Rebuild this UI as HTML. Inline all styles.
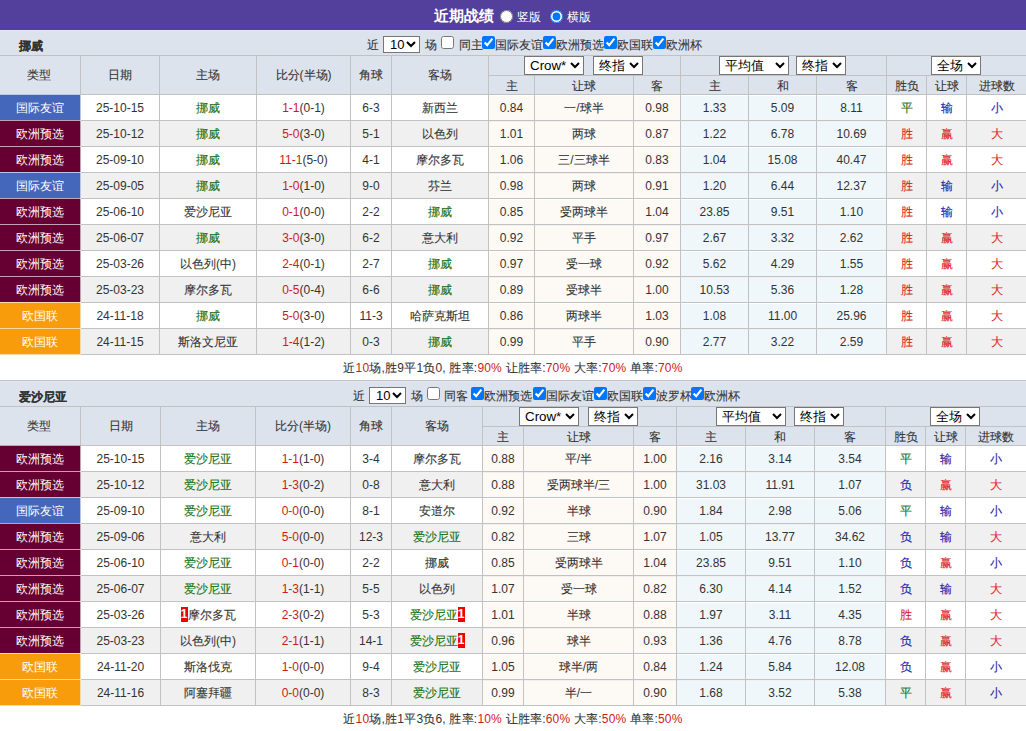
<!DOCTYPE html>
<html><head><meta charset="utf-8"><style>
*{box-sizing:border-box}
html,body{margin:0;padding:0}
body{width:1026px;height:731px;position:relative;overflow:hidden;background:#fff;font-family:"Liberation Sans",sans-serif;font-size:12px;color:#333}
.r{position:absolute}
.c{position:absolute;display:flex;align-items:center;justify-content:center;white-space:nowrap;line-height:14px}
.t{position:absolute;white-space:nowrap;line-height:14px}
.sel{position:absolute;height:19px;margin:0;padding:0 0 0 1px;font-family:"Liberation Sans",sans-serif;font-size:13.33px;color:#000;background:#fff}
.cb{position:absolute;margin:0;width:13px;height:13px}
.rad{position:absolute;margin:0;width:13px;height:13px}
.k{-webkit-text-stroke:0.1px}
.rc{display:inline-block;width:7px;height:15px;background:#e00;color:#fff;font-weight:bold;font-size:12px;line-height:15px;text-align:center;overflow:hidden}
</style></head>
<body>
<div class="r" style="left:0;top:0;width:1026px;height:30px;background:#52409c"></div>
<div class="t" style="left:434px;top:9px;color:#fff;font-size:15px;font-weight:bold">近期战绩</div>
<input type="radio" name="v" class="rad" style="left:500px;top:10px">
<div class="t" style="left:517px;top:10px;color:#fff">竖版</div>
<input type="radio" name="v" class="rad" checked style="left:550px;top:10px">
<div class="t" style="left:567px;top:10px;color:#fff">横版</div>

<div class="r" style="left:0px;top:30px;width:1026px;height:1px;background:#e6e6f8;"></div><div class="r" style="left:0px;top:31px;width:1026px;height:24px;background:#dce3ed;"></div><div class="c" style="left:19px;top:34px;width:100px;height:24px;justify-content:flex-start;font-weight:bold"><b><span class="k">挪威</span></b></div><div class="t" style="left:367px;top:38px"><span class="k">近</span></div><select class="sel" style="left:383px;top:36px;width:37px;height:17px"><option></option></select><div class="t" style="left:390px;top:38px"><span style="color:#000;font-size:13px">10</span></div><div class="t" style="left:425px;top:38px"><span class="k">场</span></div><input type="checkbox" class="cb" style="left:441px;top:36px"><div class="t" style="left:459px;top:38px"><span class="k">同主</span></div><input type="checkbox" class="cb" checked style="left:482px;top:36px"><div class="t" style="left:495px;top:38px"><span class="k">国际友谊</span></div><input type="checkbox" class="cb" checked style="left:543px;top:36px"><div class="t" style="left:556px;top:38px"><span class="k">欧洲预选</span></div><input type="checkbox" class="cb" checked style="left:604px;top:36px"><div class="t" style="left:617px;top:38px"><span class="k">欧国联</span></div><input type="checkbox" class="cb" checked style="left:653px;top:36px"><div class="t" style="left:666px;top:38px"><span class="k">欧洲杯</span></div><div class="r" style="left:0px;top:55px;width:1026px;height:39px;background:#dce3ed;"></div><div class="r" style="left:0px;top:55px;width:1026px;height:1px;background:#c2c2c2;"></div><div class="r" style="left:488px;top:75px;width:538px;height:1px;background:#c2c2c2;"></div><div class="r" style="left:0px;top:94px;width:1026px;height:1px;background:#c2c2c2;"></div><div class="r" style="left:0px;top:95px;width:1026px;height:25px;background:#fff;"></div><div class="r" style="left:489px;top:96px;width:191px;height:24px;background:#fdf9f5;"></div><div class="r" style="left:681px;top:96px;width:205px;height:24px;background:#f0f7fb;"></div><div class="r" style="left:0px;top:120px;width:1026px;height:1px;background:#c2c2c2;"></div><div class="r" style="left:0px;top:121px;width:1026px;height:25px;background:#f0f0f0;"></div><div class="r" style="left:489px;top:122px;width:191px;height:24px;background:#fdf9f5;"></div><div class="r" style="left:681px;top:122px;width:205px;height:24px;background:#f0f7fb;"></div><div class="r" style="left:0px;top:146px;width:1026px;height:1px;background:#c2c2c2;"></div><div class="r" style="left:0px;top:147px;width:1026px;height:25px;background:#fff;"></div><div class="r" style="left:489px;top:148px;width:191px;height:24px;background:#fdf9f5;"></div><div class="r" style="left:681px;top:148px;width:205px;height:24px;background:#f0f7fb;"></div><div class="r" style="left:0px;top:172px;width:1026px;height:1px;background:#c2c2c2;"></div><div class="r" style="left:0px;top:173px;width:1026px;height:25px;background:#f0f0f0;"></div><div class="r" style="left:489px;top:174px;width:191px;height:24px;background:#fdf9f5;"></div><div class="r" style="left:681px;top:174px;width:205px;height:24px;background:#f0f7fb;"></div><div class="r" style="left:0px;top:198px;width:1026px;height:1px;background:#c2c2c2;"></div><div class="r" style="left:0px;top:199px;width:1026px;height:25px;background:#fff;"></div><div class="r" style="left:489px;top:200px;width:191px;height:24px;background:#fdf9f5;"></div><div class="r" style="left:681px;top:200px;width:205px;height:24px;background:#f0f7fb;"></div><div class="r" style="left:0px;top:224px;width:1026px;height:1px;background:#c2c2c2;"></div><div class="r" style="left:0px;top:225px;width:1026px;height:25px;background:#f0f0f0;"></div><div class="r" style="left:489px;top:226px;width:191px;height:24px;background:#fdf9f5;"></div><div class="r" style="left:681px;top:226px;width:205px;height:24px;background:#f0f7fb;"></div><div class="r" style="left:0px;top:250px;width:1026px;height:1px;background:#c2c2c2;"></div><div class="r" style="left:0px;top:251px;width:1026px;height:25px;background:#fff;"></div><div class="r" style="left:489px;top:252px;width:191px;height:24px;background:#fdf9f5;"></div><div class="r" style="left:681px;top:252px;width:205px;height:24px;background:#f0f7fb;"></div><div class="r" style="left:0px;top:276px;width:1026px;height:1px;background:#c2c2c2;"></div><div class="r" style="left:0px;top:277px;width:1026px;height:25px;background:#f0f0f0;"></div><div class="r" style="left:489px;top:278px;width:191px;height:24px;background:#fdf9f5;"></div><div class="r" style="left:681px;top:278px;width:205px;height:24px;background:#f0f7fb;"></div><div class="r" style="left:0px;top:302px;width:1026px;height:1px;background:#c2c2c2;"></div><div class="r" style="left:0px;top:303px;width:1026px;height:25px;background:#fff;"></div><div class="r" style="left:489px;top:304px;width:191px;height:24px;background:#fdf9f5;"></div><div class="r" style="left:681px;top:304px;width:205px;height:24px;background:#f0f7fb;"></div><div class="r" style="left:0px;top:328px;width:1026px;height:1px;background:#c2c2c2;"></div><div class="r" style="left:0px;top:329px;width:1026px;height:25px;background:#f0f0f0;"></div><div class="r" style="left:489px;top:330px;width:191px;height:24px;background:#fdf9f5;"></div><div class="r" style="left:681px;top:330px;width:205px;height:24px;background:#f0f7fb;"></div><div class="r" style="left:0px;top:354px;width:1026px;height:1px;background:#c2c2c2;"></div><div class="r" style="left:80px;top:55px;width:1px;height:300px;background:#c2c2c2;"></div><div class="r" style="left:159px;top:55px;width:1px;height:300px;background:#c2c2c2;"></div><div class="r" style="left:256px;top:55px;width:1px;height:300px;background:#c2c2c2;"></div><div class="r" style="left:350px;top:55px;width:1px;height:300px;background:#c2c2c2;"></div><div class="r" style="left:391px;top:55px;width:1px;height:300px;background:#c2c2c2;"></div><div class="r" style="left:488px;top:55px;width:1px;height:300px;background:#c2c2c2;"></div><div class="r" style="left:534px;top:75px;width:1px;height:280px;background:#c2c2c2;"></div><div class="r" style="left:633px;top:75px;width:1px;height:280px;background:#c2c2c2;"></div><div class="r" style="left:680px;top:55px;width:1px;height:300px;background:#c2c2c2;"></div><div class="r" style="left:748px;top:75px;width:1px;height:280px;background:#c2c2c2;"></div><div class="r" style="left:816px;top:75px;width:1px;height:280px;background:#c2c2c2;"></div><div class="r" style="left:886px;top:55px;width:1px;height:300px;background:#c2c2c2;"></div><div class="r" style="left:926px;top:75px;width:1px;height:280px;background:#c2c2c2;"></div><div class="r" style="left:966px;top:75px;width:1px;height:280px;background:#c2c2c2;"></div><div class="r" style="left:0px;top:94px;width:81px;height:27px;background:#4466bb;"></div><div class="r" style="left:0px;top:120px;width:81px;height:27px;background:#660033;"></div><div class="r" style="left:0px;top:146px;width:81px;height:27px;background:#660033;"></div><div class="r" style="left:0px;top:172px;width:81px;height:27px;background:#4466bb;"></div><div class="r" style="left:0px;top:198px;width:81px;height:27px;background:#660033;"></div><div class="r" style="left:0px;top:224px;width:81px;height:27px;background:#660033;"></div><div class="r" style="left:0px;top:250px;width:81px;height:27px;background:#660033;"></div><div class="r" style="left:0px;top:276px;width:81px;height:27px;background:#660033;"></div><div class="r" style="left:0px;top:302px;width:81px;height:27px;background:#f99c0b;"></div><div class="r" style="left:0px;top:328px;width:81px;height:27px;background:#f99c0b;"></div><div class="r" style="left:0px;top:94px;width:80px;height:1px;background:rgba(255,255,255,0.63);"></div><div class="r" style="left:80px;top:94px;width:1px;height:27px;background:rgba(255,255,255,0.63);"></div><div class="r" style="left:0px;top:120px;width:80px;height:1px;background:rgba(255,255,255,0.63);"></div><div class="r" style="left:80px;top:120px;width:1px;height:27px;background:rgba(255,255,255,0.63);"></div><div class="r" style="left:0px;top:146px;width:80px;height:1px;background:rgba(255,255,255,0.63);"></div><div class="r" style="left:80px;top:146px;width:1px;height:27px;background:rgba(255,255,255,0.63);"></div><div class="r" style="left:0px;top:172px;width:80px;height:1px;background:rgba(255,255,255,0.63);"></div><div class="r" style="left:80px;top:172px;width:1px;height:27px;background:rgba(255,255,255,0.63);"></div><div class="r" style="left:0px;top:198px;width:80px;height:1px;background:rgba(255,255,255,0.63);"></div><div class="r" style="left:80px;top:198px;width:1px;height:27px;background:rgba(255,255,255,0.63);"></div><div class="r" style="left:0px;top:224px;width:80px;height:1px;background:rgba(255,255,255,0.63);"></div><div class="r" style="left:80px;top:224px;width:1px;height:27px;background:rgba(255,255,255,0.63);"></div><div class="r" style="left:0px;top:250px;width:80px;height:1px;background:rgba(255,255,255,0.63);"></div><div class="r" style="left:80px;top:250px;width:1px;height:27px;background:rgba(255,255,255,0.63);"></div><div class="r" style="left:0px;top:276px;width:80px;height:1px;background:rgba(255,255,255,0.63);"></div><div class="r" style="left:80px;top:276px;width:1px;height:27px;background:rgba(255,255,255,0.63);"></div><div class="r" style="left:0px;top:302px;width:80px;height:1px;background:rgba(255,255,255,0.63);"></div><div class="r" style="left:80px;top:302px;width:1px;height:27px;background:rgba(255,255,255,0.63);"></div><div class="r" style="left:0px;top:328px;width:80px;height:1px;background:rgba(255,255,255,0.63);"></div><div class="r" style="left:80px;top:328px;width:1px;height:27px;background:rgba(255,255,255,0.63);"></div><div class="r" style="left:0px;top:354px;width:80px;height:1px;background:rgba(255,255,255,0.63);"></div><div class="c" style="left:0px;top:56px;width:78px;height:38px;"><span class="k">类型</span></div><div class="c" style="left:81px;top:56px;width:78px;height:38px;"><span class="k">日期</span></div><div class="c" style="left:160px;top:56px;width:96px;height:38px;"><span class="k">主场</span></div><div class="c" style="left:257px;top:56px;width:93px;height:38px;"><span class="k">比分</span>(<span class="k">半场</span>)</div><div class="c" style="left:351px;top:56px;width:40px;height:38px;"><span class="k">角球</span></div><div class="c" style="left:392px;top:56px;width:96px;height:38px;"><span class="k">客场</span></div><div class="c" style="left:489px;top:77px;width:45px;height:18px;"><span class="k">主</span></div><div class="c" style="left:535px;top:77px;width:98px;height:18px;"><span class="k">让球</span></div><div class="c" style="left:634px;top:77px;width:46px;height:18px;"><span class="k">客</span></div><div class="c" style="left:681px;top:77px;width:67px;height:18px;"><span class="k">主</span></div><div class="c" style="left:749px;top:77px;width:67px;height:18px;"><span class="k">和</span></div><div class="c" style="left:817px;top:77px;width:69px;height:18px;"><span class="k">客</span></div><div class="c" style="left:887px;top:77px;width:39px;height:18px;"><span class="k">胜负</span></div><div class="c" style="left:927px;top:77px;width:39px;height:18px;"><span class="k">让球</span></div><div class="c" style="left:967px;top:77px;width:59px;height:18px;"><span class="k">进球数</span></div><select class="sel" style="left:524px;top:56px;width:60px;"><option>Crow*</option></select><select class="sel" style="left:593px;top:56px;width:50px;"><option>终指</option></select><select class="sel" style="left:719px;top:56px;width:70px;"><option>平均值</option></select><select class="sel" style="left:796px;top:56px;width:50px;"><option>终指</option></select><select class="sel" style="left:931px;top:56px;width:50px;"><option>全场</option></select><div class="c" style="left:0px;top:95px;width:79px;height:25px;color:#fff">国际友谊</div><div class="c" style="left:81px;top:95px;width:78px;height:25px;">25-10-15</div><div class="c" style="left:160px;top:95px;width:96px;height:25px;"><span style="color:#137013"><span class="k">挪威</span></span></div><div class="c" style="left:257px;top:95px;width:93px;height:25px;"><span style="color:#cc1a1a">1-1</span>(0-1)</div><div class="c" style="left:351px;top:95px;width:40px;height:25px;">6-3</div><div class="c" style="left:392px;top:95px;width:96px;height:25px;"><span class="k">新西兰</span></div><div class="c" style="left:489px;top:95px;width:45px;height:25px;">0.84</div><div class="c" style="left:535px;top:95px;width:98px;height:25px;"><span class="k">一</span>/<span class="k">球半</span></div><div class="c" style="left:634px;top:95px;width:46px;height:25px;">0.98</div><div class="c" style="left:681px;top:95px;width:67px;height:25px;">1.33</div><div class="c" style="left:749px;top:95px;width:67px;height:25px;">5.09</div><div class="c" style="left:817px;top:95px;width:69px;height:25px;">8.11</div><div class="c" style="left:887px;top:95px;width:39px;height:25px;color:#137013"><span class="k">平</span></div><div class="c" style="left:927px;top:95px;width:39px;height:25px;color:#1a1aa8"><span class="k">输</span></div><div class="c" style="left:967px;top:95px;width:59px;height:25px;color:#1a1aa8"><span class="k">小</span></div><div class="c" style="left:0px;top:121px;width:79px;height:25px;color:#fff">欧洲预选</div><div class="c" style="left:81px;top:121px;width:78px;height:25px;">25-10-12</div><div class="c" style="left:160px;top:121px;width:96px;height:25px;"><span style="color:#137013"><span class="k">挪威</span></span></div><div class="c" style="left:257px;top:121px;width:93px;height:25px;"><span style="color:#cc1a1a">5-0</span>(3-0)</div><div class="c" style="left:351px;top:121px;width:40px;height:25px;">5-1</div><div class="c" style="left:392px;top:121px;width:96px;height:25px;"><span class="k">以色列</span></div><div class="c" style="left:489px;top:121px;width:45px;height:25px;">1.01</div><div class="c" style="left:535px;top:121px;width:98px;height:25px;"><span class="k">两球</span></div><div class="c" style="left:634px;top:121px;width:46px;height:25px;">0.87</div><div class="c" style="left:681px;top:121px;width:67px;height:25px;">1.22</div><div class="c" style="left:749px;top:121px;width:67px;height:25px;">6.78</div><div class="c" style="left:817px;top:121px;width:69px;height:25px;">10.69</div><div class="c" style="left:887px;top:121px;width:39px;height:25px;color:#dd1c1c"><span class="k">胜</span></div><div class="c" style="left:927px;top:121px;width:39px;height:25px;color:#dd1c1c"><span class="k">赢</span></div><div class="c" style="left:967px;top:121px;width:59px;height:25px;color:#dd1c1c"><span class="k">大</span></div><div class="c" style="left:0px;top:147px;width:79px;height:25px;color:#fff">欧洲预选</div><div class="c" style="left:81px;top:147px;width:78px;height:25px;">25-09-10</div><div class="c" style="left:160px;top:147px;width:96px;height:25px;"><span style="color:#137013"><span class="k">挪威</span></span></div><div class="c" style="left:257px;top:147px;width:93px;height:25px;"><span style="color:#cc1a1a">11-1</span>(5-0)</div><div class="c" style="left:351px;top:147px;width:40px;height:25px;">4-1</div><div class="c" style="left:392px;top:147px;width:96px;height:25px;"><span class="k">摩尔多瓦</span></div><div class="c" style="left:489px;top:147px;width:45px;height:25px;">1.06</div><div class="c" style="left:535px;top:147px;width:98px;height:25px;"><span class="k">三</span>/<span class="k">三球半</span></div><div class="c" style="left:634px;top:147px;width:46px;height:25px;">0.83</div><div class="c" style="left:681px;top:147px;width:67px;height:25px;">1.04</div><div class="c" style="left:749px;top:147px;width:67px;height:25px;">15.08</div><div class="c" style="left:817px;top:147px;width:69px;height:25px;">40.47</div><div class="c" style="left:887px;top:147px;width:39px;height:25px;color:#dd1c1c"><span class="k">胜</span></div><div class="c" style="left:927px;top:147px;width:39px;height:25px;color:#dd1c1c"><span class="k">赢</span></div><div class="c" style="left:967px;top:147px;width:59px;height:25px;color:#dd1c1c"><span class="k">大</span></div><div class="c" style="left:0px;top:173px;width:79px;height:25px;color:#fff">国际友谊</div><div class="c" style="left:81px;top:173px;width:78px;height:25px;">25-09-05</div><div class="c" style="left:160px;top:173px;width:96px;height:25px;"><span style="color:#137013"><span class="k">挪威</span></span></div><div class="c" style="left:257px;top:173px;width:93px;height:25px;"><span style="color:#cc1a1a">1-0</span>(1-0)</div><div class="c" style="left:351px;top:173px;width:40px;height:25px;">9-0</div><div class="c" style="left:392px;top:173px;width:96px;height:25px;"><span class="k">芬兰</span></div><div class="c" style="left:489px;top:173px;width:45px;height:25px;">0.98</div><div class="c" style="left:535px;top:173px;width:98px;height:25px;"><span class="k">两球</span></div><div class="c" style="left:634px;top:173px;width:46px;height:25px;">0.91</div><div class="c" style="left:681px;top:173px;width:67px;height:25px;">1.20</div><div class="c" style="left:749px;top:173px;width:67px;height:25px;">6.44</div><div class="c" style="left:817px;top:173px;width:69px;height:25px;">12.37</div><div class="c" style="left:887px;top:173px;width:39px;height:25px;color:#dd1c1c"><span class="k">胜</span></div><div class="c" style="left:927px;top:173px;width:39px;height:25px;color:#1a1aa8"><span class="k">输</span></div><div class="c" style="left:967px;top:173px;width:59px;height:25px;color:#1a1aa8"><span class="k">小</span></div><div class="c" style="left:0px;top:199px;width:79px;height:25px;color:#fff">欧洲预选</div><div class="c" style="left:81px;top:199px;width:78px;height:25px;">25-06-10</div><div class="c" style="left:160px;top:199px;width:96px;height:25px;"><span class="k">爱沙尼亚</span></div><div class="c" style="left:257px;top:199px;width:93px;height:25px;"><span style="color:#cc1a1a">0-1</span>(0-0)</div><div class="c" style="left:351px;top:199px;width:40px;height:25px;">2-2</div><div class="c" style="left:392px;top:199px;width:96px;height:25px;"><span style="color:#137013"><span class="k">挪威</span></span></div><div class="c" style="left:489px;top:199px;width:45px;height:25px;">0.85</div><div class="c" style="left:535px;top:199px;width:98px;height:25px;"><span class="k">受两球半</span></div><div class="c" style="left:634px;top:199px;width:46px;height:25px;">1.04</div><div class="c" style="left:681px;top:199px;width:67px;height:25px;">23.85</div><div class="c" style="left:749px;top:199px;width:67px;height:25px;">9.51</div><div class="c" style="left:817px;top:199px;width:69px;height:25px;">1.10</div><div class="c" style="left:887px;top:199px;width:39px;height:25px;color:#dd1c1c"><span class="k">胜</span></div><div class="c" style="left:927px;top:199px;width:39px;height:25px;color:#1a1aa8"><span class="k">输</span></div><div class="c" style="left:967px;top:199px;width:59px;height:25px;color:#1a1aa8"><span class="k">小</span></div><div class="c" style="left:0px;top:225px;width:79px;height:25px;color:#fff">欧洲预选</div><div class="c" style="left:81px;top:225px;width:78px;height:25px;">25-06-07</div><div class="c" style="left:160px;top:225px;width:96px;height:25px;"><span style="color:#137013"><span class="k">挪威</span></span></div><div class="c" style="left:257px;top:225px;width:93px;height:25px;"><span style="color:#cc1a1a">3-0</span>(3-0)</div><div class="c" style="left:351px;top:225px;width:40px;height:25px;">6-2</div><div class="c" style="left:392px;top:225px;width:96px;height:25px;"><span class="k">意大利</span></div><div class="c" style="left:489px;top:225px;width:45px;height:25px;">0.92</div><div class="c" style="left:535px;top:225px;width:98px;height:25px;"><span class="k">平手</span></div><div class="c" style="left:634px;top:225px;width:46px;height:25px;">0.97</div><div class="c" style="left:681px;top:225px;width:67px;height:25px;">2.67</div><div class="c" style="left:749px;top:225px;width:67px;height:25px;">3.32</div><div class="c" style="left:817px;top:225px;width:69px;height:25px;">2.62</div><div class="c" style="left:887px;top:225px;width:39px;height:25px;color:#dd1c1c"><span class="k">胜</span></div><div class="c" style="left:927px;top:225px;width:39px;height:25px;color:#dd1c1c"><span class="k">赢</span></div><div class="c" style="left:967px;top:225px;width:59px;height:25px;color:#dd1c1c"><span class="k">大</span></div><div class="c" style="left:0px;top:251px;width:79px;height:25px;color:#fff">欧洲预选</div><div class="c" style="left:81px;top:251px;width:78px;height:25px;">25-03-26</div><div class="c" style="left:160px;top:251px;width:96px;height:25px;"><span class="k">以色列</span>(<span class="k">中</span>)</div><div class="c" style="left:257px;top:251px;width:93px;height:25px;"><span style="color:#cc1a1a">2-4</span>(0-1)</div><div class="c" style="left:351px;top:251px;width:40px;height:25px;">2-7</div><div class="c" style="left:392px;top:251px;width:96px;height:25px;"><span style="color:#137013"><span class="k">挪威</span></span></div><div class="c" style="left:489px;top:251px;width:45px;height:25px;">0.97</div><div class="c" style="left:535px;top:251px;width:98px;height:25px;"><span class="k">受一球</span></div><div class="c" style="left:634px;top:251px;width:46px;height:25px;">0.92</div><div class="c" style="left:681px;top:251px;width:67px;height:25px;">5.62</div><div class="c" style="left:749px;top:251px;width:67px;height:25px;">4.29</div><div class="c" style="left:817px;top:251px;width:69px;height:25px;">1.55</div><div class="c" style="left:887px;top:251px;width:39px;height:25px;color:#dd1c1c"><span class="k">胜</span></div><div class="c" style="left:927px;top:251px;width:39px;height:25px;color:#dd1c1c"><span class="k">赢</span></div><div class="c" style="left:967px;top:251px;width:59px;height:25px;color:#dd1c1c"><span class="k">大</span></div><div class="c" style="left:0px;top:277px;width:79px;height:25px;color:#fff">欧洲预选</div><div class="c" style="left:81px;top:277px;width:78px;height:25px;">25-03-23</div><div class="c" style="left:160px;top:277px;width:96px;height:25px;"><span class="k">摩尔多瓦</span></div><div class="c" style="left:257px;top:277px;width:93px;height:25px;"><span style="color:#cc1a1a">0-5</span>(0-4)</div><div class="c" style="left:351px;top:277px;width:40px;height:25px;">6-6</div><div class="c" style="left:392px;top:277px;width:96px;height:25px;"><span style="color:#137013"><span class="k">挪威</span></span></div><div class="c" style="left:489px;top:277px;width:45px;height:25px;">0.89</div><div class="c" style="left:535px;top:277px;width:98px;height:25px;"><span class="k">受球半</span></div><div class="c" style="left:634px;top:277px;width:46px;height:25px;">1.00</div><div class="c" style="left:681px;top:277px;width:67px;height:25px;">10.53</div><div class="c" style="left:749px;top:277px;width:67px;height:25px;">5.36</div><div class="c" style="left:817px;top:277px;width:69px;height:25px;">1.28</div><div class="c" style="left:887px;top:277px;width:39px;height:25px;color:#dd1c1c"><span class="k">胜</span></div><div class="c" style="left:927px;top:277px;width:39px;height:25px;color:#dd1c1c"><span class="k">赢</span></div><div class="c" style="left:967px;top:277px;width:59px;height:25px;color:#dd1c1c"><span class="k">大</span></div><div class="c" style="left:0px;top:303px;width:79px;height:25px;color:#fff">欧国联</div><div class="c" style="left:81px;top:303px;width:78px;height:25px;">24-11-18</div><div class="c" style="left:160px;top:303px;width:96px;height:25px;"><span style="color:#137013"><span class="k">挪威</span></span></div><div class="c" style="left:257px;top:303px;width:93px;height:25px;"><span style="color:#cc1a1a">5-0</span>(3-0)</div><div class="c" style="left:351px;top:303px;width:40px;height:25px;">11-3</div><div class="c" style="left:392px;top:303px;width:96px;height:25px;"><span class="k">哈萨克斯坦</span></div><div class="c" style="left:489px;top:303px;width:45px;height:25px;">0.86</div><div class="c" style="left:535px;top:303px;width:98px;height:25px;"><span class="k">两球半</span></div><div class="c" style="left:634px;top:303px;width:46px;height:25px;">1.03</div><div class="c" style="left:681px;top:303px;width:67px;height:25px;">1.08</div><div class="c" style="left:749px;top:303px;width:67px;height:25px;">11.00</div><div class="c" style="left:817px;top:303px;width:69px;height:25px;">25.96</div><div class="c" style="left:887px;top:303px;width:39px;height:25px;color:#dd1c1c"><span class="k">胜</span></div><div class="c" style="left:927px;top:303px;width:39px;height:25px;color:#dd1c1c"><span class="k">赢</span></div><div class="c" style="left:967px;top:303px;width:59px;height:25px;color:#dd1c1c"><span class="k">大</span></div><div class="c" style="left:0px;top:329px;width:79px;height:25px;color:#fff">欧国联</div><div class="c" style="left:81px;top:329px;width:78px;height:25px;">24-11-15</div><div class="c" style="left:160px;top:329px;width:96px;height:25px;"><span class="k">斯洛文尼亚</span></div><div class="c" style="left:257px;top:329px;width:93px;height:25px;"><span style="color:#cc1a1a">1-4</span>(1-2)</div><div class="c" style="left:351px;top:329px;width:40px;height:25px;">0-3</div><div class="c" style="left:392px;top:329px;width:96px;height:25px;"><span style="color:#137013"><span class="k">挪威</span></span></div><div class="c" style="left:489px;top:329px;width:45px;height:25px;">0.99</div><div class="c" style="left:535px;top:329px;width:98px;height:25px;"><span class="k">平手</span></div><div class="c" style="left:634px;top:329px;width:46px;height:25px;">0.90</div><div class="c" style="left:681px;top:329px;width:67px;height:25px;">2.77</div><div class="c" style="left:749px;top:329px;width:67px;height:25px;">3.22</div><div class="c" style="left:817px;top:329px;width:69px;height:25px;">2.59</div><div class="c" style="left:887px;top:329px;width:39px;height:25px;color:#dd1c1c"><span class="k">胜</span></div><div class="c" style="left:927px;top:329px;width:39px;height:25px;color:#dd1c1c"><span class="k">赢</span></div><div class="c" style="left:967px;top:329px;width:59px;height:25px;color:#dd1c1c"><span class="k">大</span></div><div class="r" style="left:0px;top:355px;width:1026px;height:25px;background:#fff;"></div><div class="c" style="left:0px;top:355px;width:1026px;height:25px;"><span style="letter-spacing:0.2px"><span class="k">近</span><span style="color:#cc1a1a">10</span><span class="k">场</span>,<span class="k">胜</span>9<span class="k">平</span>1<span class="k">负</span>0, <span class="k">胜率</span>:<span style="color:#cc1a1a">90%</span> <span class="k">让胜率</span>:<span style="color:#cc1a1a">70%</span> <span class="k">大率</span>:<span style="color:#cc1a1a">70%</span> <span class="k">单率</span>:<span style="color:#cc1a1a">70%</span></span></div><div class="r" style="left:0px;top:380px;width:1026px;height:1px;background:#c2c2c2;"></div><div class="r" style="left:0px;top:381px;width:1026px;height:1px;background:#e6e6f8;"></div><div class="r" style="left:0px;top:382px;width:1026px;height:24px;background:#dce3ed;"></div><div class="c" style="left:19px;top:385px;width:100px;height:24px;justify-content:flex-start;font-weight:bold"><b><span class="k">爱沙尼亚</span></b></div><div class="t" style="left:353px;top:389px"><span class="k">近</span></div><select class="sel" style="left:369px;top:387px;width:37px;height:17px"><option></option></select><div class="t" style="left:376px;top:389px"><span style="color:#000;font-size:13px">10</span></div><div class="t" style="left:411px;top:389px"><span class="k">场</span></div><input type="checkbox" class="cb" style="left:427px;top:387px"><div class="t" style="left:444px;top:389px"><span class="k">同客</span></div><input type="checkbox" class="cb" checked style="left:471px;top:387px"><div class="t" style="left:484px;top:389px"><span class="k">欧洲预选</span></div><input type="checkbox" class="cb" checked style="left:533px;top:387px"><div class="t" style="left:546px;top:389px"><span class="k">国际友谊</span></div><input type="checkbox" class="cb" checked style="left:594px;top:387px"><div class="t" style="left:607px;top:389px"><span class="k">欧国联</span></div><input type="checkbox" class="cb" checked style="left:643px;top:387px"><div class="t" style="left:656px;top:389px"><span class="k">波罗杯</span></div><input type="checkbox" class="cb" checked style="left:691px;top:387px"><div class="t" style="left:704px;top:389px"><span class="k">欧洲杯</span></div><div class="r" style="left:0px;top:406px;width:1026px;height:39px;background:#dce3ed;"></div><div class="r" style="left:0px;top:406px;width:1026px;height:1px;background:#c2c2c2;"></div><div class="r" style="left:482px;top:426px;width:544px;height:1px;background:#c2c2c2;"></div><div class="r" style="left:0px;top:445px;width:1026px;height:1px;background:#c2c2c2;"></div><div class="r" style="left:0px;top:446px;width:1026px;height:25px;background:#fff;"></div><div class="r" style="left:483px;top:447px;width:193px;height:24px;background:#fdf9f5;"></div><div class="r" style="left:677px;top:447px;width:208px;height:24px;background:#f0f7fb;"></div><div class="r" style="left:0px;top:471px;width:1026px;height:1px;background:#c2c2c2;"></div><div class="r" style="left:0px;top:472px;width:1026px;height:25px;background:#f0f0f0;"></div><div class="r" style="left:483px;top:473px;width:193px;height:24px;background:#fdf9f5;"></div><div class="r" style="left:677px;top:473px;width:208px;height:24px;background:#f0f7fb;"></div><div class="r" style="left:0px;top:497px;width:1026px;height:1px;background:#c2c2c2;"></div><div class="r" style="left:0px;top:498px;width:1026px;height:25px;background:#fff;"></div><div class="r" style="left:483px;top:499px;width:193px;height:24px;background:#fdf9f5;"></div><div class="r" style="left:677px;top:499px;width:208px;height:24px;background:#f0f7fb;"></div><div class="r" style="left:0px;top:523px;width:1026px;height:1px;background:#c2c2c2;"></div><div class="r" style="left:0px;top:524px;width:1026px;height:25px;background:#f0f0f0;"></div><div class="r" style="left:483px;top:525px;width:193px;height:24px;background:#fdf9f5;"></div><div class="r" style="left:677px;top:525px;width:208px;height:24px;background:#f0f7fb;"></div><div class="r" style="left:0px;top:549px;width:1026px;height:1px;background:#c2c2c2;"></div><div class="r" style="left:0px;top:550px;width:1026px;height:25px;background:#fff;"></div><div class="r" style="left:483px;top:551px;width:193px;height:24px;background:#fdf9f5;"></div><div class="r" style="left:677px;top:551px;width:208px;height:24px;background:#f0f7fb;"></div><div class="r" style="left:0px;top:575px;width:1026px;height:1px;background:#c2c2c2;"></div><div class="r" style="left:0px;top:576px;width:1026px;height:25px;background:#f0f0f0;"></div><div class="r" style="left:483px;top:577px;width:193px;height:24px;background:#fdf9f5;"></div><div class="r" style="left:677px;top:577px;width:208px;height:24px;background:#f0f7fb;"></div><div class="r" style="left:0px;top:601px;width:1026px;height:1px;background:#c2c2c2;"></div><div class="r" style="left:0px;top:602px;width:1026px;height:25px;background:#fff;"></div><div class="r" style="left:483px;top:603px;width:193px;height:24px;background:#fdf9f5;"></div><div class="r" style="left:677px;top:603px;width:208px;height:24px;background:#f0f7fb;"></div><div class="r" style="left:0px;top:627px;width:1026px;height:1px;background:#c2c2c2;"></div><div class="r" style="left:0px;top:628px;width:1026px;height:25px;background:#f0f0f0;"></div><div class="r" style="left:483px;top:629px;width:193px;height:24px;background:#fdf9f5;"></div><div class="r" style="left:677px;top:629px;width:208px;height:24px;background:#f0f7fb;"></div><div class="r" style="left:0px;top:653px;width:1026px;height:1px;background:#c2c2c2;"></div><div class="r" style="left:0px;top:654px;width:1026px;height:25px;background:#fff;"></div><div class="r" style="left:483px;top:655px;width:193px;height:24px;background:#fdf9f5;"></div><div class="r" style="left:677px;top:655px;width:208px;height:24px;background:#f0f7fb;"></div><div class="r" style="left:0px;top:679px;width:1026px;height:1px;background:#c2c2c2;"></div><div class="r" style="left:0px;top:680px;width:1026px;height:25px;background:#f0f0f0;"></div><div class="r" style="left:483px;top:681px;width:193px;height:24px;background:#fdf9f5;"></div><div class="r" style="left:677px;top:681px;width:208px;height:24px;background:#f0f7fb;"></div><div class="r" style="left:0px;top:705px;width:1026px;height:1px;background:#c2c2c2;"></div><div class="r" style="left:80px;top:406px;width:1px;height:300px;background:#c2c2c2;"></div><div class="r" style="left:160px;top:406px;width:1px;height:300px;background:#c2c2c2;"></div><div class="r" style="left:255px;top:406px;width:1px;height:300px;background:#c2c2c2;"></div><div class="r" style="left:350px;top:406px;width:1px;height:300px;background:#c2c2c2;"></div><div class="r" style="left:391px;top:406px;width:1px;height:300px;background:#c2c2c2;"></div><div class="r" style="left:482px;top:406px;width:1px;height:300px;background:#c2c2c2;"></div><div class="r" style="left:523px;top:426px;width:1px;height:280px;background:#c2c2c2;"></div><div class="r" style="left:633px;top:426px;width:1px;height:280px;background:#c2c2c2;"></div><div class="r" style="left:676px;top:406px;width:1px;height:300px;background:#c2c2c2;"></div><div class="r" style="left:745px;top:426px;width:1px;height:280px;background:#c2c2c2;"></div><div class="r" style="left:814px;top:426px;width:1px;height:280px;background:#c2c2c2;"></div><div class="r" style="left:885px;top:406px;width:1px;height:300px;background:#c2c2c2;"></div><div class="r" style="left:925px;top:426px;width:1px;height:280px;background:#c2c2c2;"></div><div class="r" style="left:965px;top:426px;width:1px;height:280px;background:#c2c2c2;"></div><div class="r" style="left:0px;top:445px;width:81px;height:27px;background:#660033;"></div><div class="r" style="left:0px;top:471px;width:81px;height:27px;background:#660033;"></div><div class="r" style="left:0px;top:497px;width:81px;height:27px;background:#4466bb;"></div><div class="r" style="left:0px;top:523px;width:81px;height:27px;background:#660033;"></div><div class="r" style="left:0px;top:549px;width:81px;height:27px;background:#660033;"></div><div class="r" style="left:0px;top:575px;width:81px;height:27px;background:#660033;"></div><div class="r" style="left:0px;top:601px;width:81px;height:27px;background:#660033;"></div><div class="r" style="left:0px;top:627px;width:81px;height:27px;background:#660033;"></div><div class="r" style="left:0px;top:653px;width:81px;height:27px;background:#f99c0b;"></div><div class="r" style="left:0px;top:679px;width:81px;height:27px;background:#f99c0b;"></div><div class="r" style="left:0px;top:445px;width:80px;height:1px;background:rgba(255,255,255,0.63);"></div><div class="r" style="left:80px;top:445px;width:1px;height:27px;background:rgba(255,255,255,0.63);"></div><div class="r" style="left:0px;top:471px;width:80px;height:1px;background:rgba(255,255,255,0.63);"></div><div class="r" style="left:80px;top:471px;width:1px;height:27px;background:rgba(255,255,255,0.63);"></div><div class="r" style="left:0px;top:497px;width:80px;height:1px;background:rgba(255,255,255,0.63);"></div><div class="r" style="left:80px;top:497px;width:1px;height:27px;background:rgba(255,255,255,0.63);"></div><div class="r" style="left:0px;top:523px;width:80px;height:1px;background:rgba(255,255,255,0.63);"></div><div class="r" style="left:80px;top:523px;width:1px;height:27px;background:rgba(255,255,255,0.63);"></div><div class="r" style="left:0px;top:549px;width:80px;height:1px;background:rgba(255,255,255,0.63);"></div><div class="r" style="left:80px;top:549px;width:1px;height:27px;background:rgba(255,255,255,0.63);"></div><div class="r" style="left:0px;top:575px;width:80px;height:1px;background:rgba(255,255,255,0.63);"></div><div class="r" style="left:80px;top:575px;width:1px;height:27px;background:rgba(255,255,255,0.63);"></div><div class="r" style="left:0px;top:601px;width:80px;height:1px;background:rgba(255,255,255,0.63);"></div><div class="r" style="left:80px;top:601px;width:1px;height:27px;background:rgba(255,255,255,0.63);"></div><div class="r" style="left:0px;top:627px;width:80px;height:1px;background:rgba(255,255,255,0.63);"></div><div class="r" style="left:80px;top:627px;width:1px;height:27px;background:rgba(255,255,255,0.63);"></div><div class="r" style="left:0px;top:653px;width:80px;height:1px;background:rgba(255,255,255,0.63);"></div><div class="r" style="left:80px;top:653px;width:1px;height:27px;background:rgba(255,255,255,0.63);"></div><div class="r" style="left:0px;top:679px;width:80px;height:1px;background:rgba(255,255,255,0.63);"></div><div class="r" style="left:80px;top:679px;width:1px;height:27px;background:rgba(255,255,255,0.63);"></div><div class="r" style="left:0px;top:705px;width:80px;height:1px;background:rgba(255,255,255,0.63);"></div><div class="c" style="left:0px;top:407px;width:78px;height:38px;"><span class="k">类型</span></div><div class="c" style="left:81px;top:407px;width:79px;height:38px;"><span class="k">日期</span></div><div class="c" style="left:161px;top:407px;width:94px;height:38px;"><span class="k">主场</span></div><div class="c" style="left:256px;top:407px;width:94px;height:38px;"><span class="k">比分</span>(<span class="k">半场</span>)</div><div class="c" style="left:351px;top:407px;width:40px;height:38px;"><span class="k">角球</span></div><div class="c" style="left:392px;top:407px;width:90px;height:38px;"><span class="k">客场</span></div><div class="c" style="left:483px;top:428px;width:40px;height:18px;"><span class="k">主</span></div><div class="c" style="left:524px;top:428px;width:109px;height:18px;"><span class="k">让球</span></div><div class="c" style="left:634px;top:428px;width:42px;height:18px;"><span class="k">客</span></div><div class="c" style="left:677px;top:428px;width:68px;height:18px;"><span class="k">主</span></div><div class="c" style="left:746px;top:428px;width:68px;height:18px;"><span class="k">和</span></div><div class="c" style="left:815px;top:428px;width:70px;height:18px;"><span class="k">客</span></div><div class="c" style="left:886px;top:428px;width:39px;height:18px;"><span class="k">胜负</span></div><div class="c" style="left:926px;top:428px;width:39px;height:18px;"><span class="k">让球</span></div><div class="c" style="left:966px;top:428px;width:60px;height:18px;"><span class="k">进球数</span></div><select class="sel" style="left:519px;top:407px;width:60px;"><option>Crow*</option></select><select class="sel" style="left:588px;top:407px;width:50px;"><option>终指</option></select><select class="sel" style="left:716px;top:407px;width:70px;"><option>平均值</option></select><select class="sel" style="left:794px;top:407px;width:50px;"><option>终指</option></select><select class="sel" style="left:930px;top:407px;width:50px;"><option>全场</option></select><div class="c" style="left:0px;top:446px;width:79px;height:25px;color:#fff">欧洲预选</div><div class="c" style="left:81px;top:446px;width:79px;height:25px;">25-10-15</div><div class="c" style="left:161px;top:446px;width:94px;height:25px;"><span style="color:#137013"><span class="k">爱沙尼亚</span></span></div><div class="c" style="left:256px;top:446px;width:94px;height:25px;"><span style="color:#cc1a1a">1-1</span>(1-0)</div><div class="c" style="left:351px;top:446px;width:40px;height:25px;">3-4</div><div class="c" style="left:392px;top:446px;width:90px;height:25px;"><span class="k">摩尔多瓦</span></div><div class="c" style="left:483px;top:446px;width:40px;height:25px;">0.88</div><div class="c" style="left:524px;top:446px;width:109px;height:25px;"><span class="k">平</span>/<span class="k">半</span></div><div class="c" style="left:634px;top:446px;width:42px;height:25px;">1.00</div><div class="c" style="left:677px;top:446px;width:68px;height:25px;">2.16</div><div class="c" style="left:746px;top:446px;width:68px;height:25px;">3.14</div><div class="c" style="left:815px;top:446px;width:70px;height:25px;">3.54</div><div class="c" style="left:886px;top:446px;width:39px;height:25px;color:#137013"><span class="k">平</span></div><div class="c" style="left:926px;top:446px;width:39px;height:25px;color:#1a1aa8"><span class="k">输</span></div><div class="c" style="left:966px;top:446px;width:60px;height:25px;color:#1a1aa8"><span class="k">小</span></div><div class="c" style="left:0px;top:472px;width:79px;height:25px;color:#fff">欧洲预选</div><div class="c" style="left:81px;top:472px;width:79px;height:25px;">25-10-12</div><div class="c" style="left:161px;top:472px;width:94px;height:25px;"><span style="color:#137013"><span class="k">爱沙尼亚</span></span></div><div class="c" style="left:256px;top:472px;width:94px;height:25px;"><span style="color:#cc1a1a">1-3</span>(0-2)</div><div class="c" style="left:351px;top:472px;width:40px;height:25px;">0-8</div><div class="c" style="left:392px;top:472px;width:90px;height:25px;"><span class="k">意大利</span></div><div class="c" style="left:483px;top:472px;width:40px;height:25px;">0.88</div><div class="c" style="left:524px;top:472px;width:109px;height:25px;"><span class="k">受两球半</span>/<span class="k">三</span></div><div class="c" style="left:634px;top:472px;width:42px;height:25px;">1.00</div><div class="c" style="left:677px;top:472px;width:68px;height:25px;">31.03</div><div class="c" style="left:746px;top:472px;width:68px;height:25px;">11.91</div><div class="c" style="left:815px;top:472px;width:70px;height:25px;">1.07</div><div class="c" style="left:886px;top:472px;width:39px;height:25px;color:#1a1aa8"><span class="k">负</span></div><div class="c" style="left:926px;top:472px;width:39px;height:25px;color:#dd1c1c"><span class="k">赢</span></div><div class="c" style="left:966px;top:472px;width:60px;height:25px;color:#dd1c1c"><span class="k">大</span></div><div class="c" style="left:0px;top:498px;width:79px;height:25px;color:#fff">国际友谊</div><div class="c" style="left:81px;top:498px;width:79px;height:25px;">25-09-10</div><div class="c" style="left:161px;top:498px;width:94px;height:25px;"><span style="color:#137013"><span class="k">爱沙尼亚</span></span></div><div class="c" style="left:256px;top:498px;width:94px;height:25px;"><span style="color:#cc1a1a">0-0</span>(0-0)</div><div class="c" style="left:351px;top:498px;width:40px;height:25px;">8-1</div><div class="c" style="left:392px;top:498px;width:90px;height:25px;"><span class="k">安道尔</span></div><div class="c" style="left:483px;top:498px;width:40px;height:25px;">0.92</div><div class="c" style="left:524px;top:498px;width:109px;height:25px;"><span class="k">半球</span></div><div class="c" style="left:634px;top:498px;width:42px;height:25px;">0.90</div><div class="c" style="left:677px;top:498px;width:68px;height:25px;">1.84</div><div class="c" style="left:746px;top:498px;width:68px;height:25px;">2.98</div><div class="c" style="left:815px;top:498px;width:70px;height:25px;">5.06</div><div class="c" style="left:886px;top:498px;width:39px;height:25px;color:#137013"><span class="k">平</span></div><div class="c" style="left:926px;top:498px;width:39px;height:25px;color:#1a1aa8"><span class="k">输</span></div><div class="c" style="left:966px;top:498px;width:60px;height:25px;color:#1a1aa8"><span class="k">小</span></div><div class="c" style="left:0px;top:524px;width:79px;height:25px;color:#fff">欧洲预选</div><div class="c" style="left:81px;top:524px;width:79px;height:25px;">25-09-06</div><div class="c" style="left:161px;top:524px;width:94px;height:25px;"><span class="k">意大利</span></div><div class="c" style="left:256px;top:524px;width:94px;height:25px;"><span style="color:#cc1a1a">5-0</span>(0-0)</div><div class="c" style="left:351px;top:524px;width:40px;height:25px;">12-3</div><div class="c" style="left:392px;top:524px;width:90px;height:25px;"><span style="color:#137013"><span class="k">爱沙尼亚</span></span></div><div class="c" style="left:483px;top:524px;width:40px;height:25px;">0.82</div><div class="c" style="left:524px;top:524px;width:109px;height:25px;"><span class="k">三球</span></div><div class="c" style="left:634px;top:524px;width:42px;height:25px;">1.07</div><div class="c" style="left:677px;top:524px;width:68px;height:25px;">1.05</div><div class="c" style="left:746px;top:524px;width:68px;height:25px;">13.77</div><div class="c" style="left:815px;top:524px;width:70px;height:25px;">34.62</div><div class="c" style="left:886px;top:524px;width:39px;height:25px;color:#1a1aa8"><span class="k">负</span></div><div class="c" style="left:926px;top:524px;width:39px;height:25px;color:#1a1aa8"><span class="k">输</span></div><div class="c" style="left:966px;top:524px;width:60px;height:25px;color:#dd1c1c"><span class="k">大</span></div><div class="c" style="left:0px;top:550px;width:79px;height:25px;color:#fff">欧洲预选</div><div class="c" style="left:81px;top:550px;width:79px;height:25px;">25-06-10</div><div class="c" style="left:161px;top:550px;width:94px;height:25px;"><span style="color:#137013"><span class="k">爱沙尼亚</span></span></div><div class="c" style="left:256px;top:550px;width:94px;height:25px;"><span style="color:#cc1a1a">0-1</span>(0-0)</div><div class="c" style="left:351px;top:550px;width:40px;height:25px;">2-2</div><div class="c" style="left:392px;top:550px;width:90px;height:25px;"><span class="k">挪威</span></div><div class="c" style="left:483px;top:550px;width:40px;height:25px;">0.85</div><div class="c" style="left:524px;top:550px;width:109px;height:25px;"><span class="k">受两球半</span></div><div class="c" style="left:634px;top:550px;width:42px;height:25px;">1.04</div><div class="c" style="left:677px;top:550px;width:68px;height:25px;">23.85</div><div class="c" style="left:746px;top:550px;width:68px;height:25px;">9.51</div><div class="c" style="left:815px;top:550px;width:70px;height:25px;">1.10</div><div class="c" style="left:886px;top:550px;width:39px;height:25px;color:#1a1aa8"><span class="k">负</span></div><div class="c" style="left:926px;top:550px;width:39px;height:25px;color:#dd1c1c"><span class="k">赢</span></div><div class="c" style="left:966px;top:550px;width:60px;height:25px;color:#1a1aa8"><span class="k">小</span></div><div class="c" style="left:0px;top:576px;width:79px;height:25px;color:#fff">欧洲预选</div><div class="c" style="left:81px;top:576px;width:79px;height:25px;">25-06-07</div><div class="c" style="left:161px;top:576px;width:94px;height:25px;"><span style="color:#137013"><span class="k">爱沙尼亚</span></span></div><div class="c" style="left:256px;top:576px;width:94px;height:25px;"><span style="color:#cc1a1a">1-3</span>(1-1)</div><div class="c" style="left:351px;top:576px;width:40px;height:25px;">5-5</div><div class="c" style="left:392px;top:576px;width:90px;height:25px;"><span class="k">以色列</span></div><div class="c" style="left:483px;top:576px;width:40px;height:25px;">1.07</div><div class="c" style="left:524px;top:576px;width:109px;height:25px;"><span class="k">受一球</span></div><div class="c" style="left:634px;top:576px;width:42px;height:25px;">0.82</div><div class="c" style="left:677px;top:576px;width:68px;height:25px;">6.30</div><div class="c" style="left:746px;top:576px;width:68px;height:25px;">4.14</div><div class="c" style="left:815px;top:576px;width:70px;height:25px;">1.52</div><div class="c" style="left:886px;top:576px;width:39px;height:25px;color:#1a1aa8"><span class="k">负</span></div><div class="c" style="left:926px;top:576px;width:39px;height:25px;color:#1a1aa8"><span class="k">输</span></div><div class="c" style="left:966px;top:576px;width:60px;height:25px;color:#dd1c1c"><span class="k">大</span></div><div class="c" style="left:0px;top:602px;width:79px;height:25px;color:#fff">欧洲预选</div><div class="c" style="left:81px;top:602px;width:79px;height:25px;">25-03-26</div><div class="c" style="left:161px;top:602px;width:94px;height:25px;"><b class="rc">1</b><span class="k">摩尔多瓦</span></div><div class="c" style="left:256px;top:602px;width:94px;height:25px;"><span style="color:#cc1a1a">2-3</span>(0-2)</div><div class="c" style="left:351px;top:602px;width:40px;height:25px;">5-3</div><div class="c" style="left:392px;top:602px;width:90px;height:25px;"><span style="color:#137013"><span class="k">爱沙尼亚</span></span><b class="rc">1</b></div><div class="c" style="left:483px;top:602px;width:40px;height:25px;">1.01</div><div class="c" style="left:524px;top:602px;width:109px;height:25px;"><span class="k">半球</span></div><div class="c" style="left:634px;top:602px;width:42px;height:25px;">0.88</div><div class="c" style="left:677px;top:602px;width:68px;height:25px;">1.97</div><div class="c" style="left:746px;top:602px;width:68px;height:25px;">3.11</div><div class="c" style="left:815px;top:602px;width:70px;height:25px;">4.35</div><div class="c" style="left:886px;top:602px;width:39px;height:25px;color:#dd1c1c"><span class="k">胜</span></div><div class="c" style="left:926px;top:602px;width:39px;height:25px;color:#dd1c1c"><span class="k">赢</span></div><div class="c" style="left:966px;top:602px;width:60px;height:25px;color:#dd1c1c"><span class="k">大</span></div><div class="c" style="left:0px;top:628px;width:79px;height:25px;color:#fff">欧洲预选</div><div class="c" style="left:81px;top:628px;width:79px;height:25px;">25-03-23</div><div class="c" style="left:161px;top:628px;width:94px;height:25px;"><span class="k">以色列</span>(<span class="k">中</span>)</div><div class="c" style="left:256px;top:628px;width:94px;height:25px;"><span style="color:#cc1a1a">2-1</span>(1-1)</div><div class="c" style="left:351px;top:628px;width:40px;height:25px;">14-1</div><div class="c" style="left:392px;top:628px;width:90px;height:25px;"><span style="color:#137013"><span class="k">爱沙尼亚</span></span><b class="rc">1</b></div><div class="c" style="left:483px;top:628px;width:40px;height:25px;">0.96</div><div class="c" style="left:524px;top:628px;width:109px;height:25px;"><span class="k">球半</span></div><div class="c" style="left:634px;top:628px;width:42px;height:25px;">0.93</div><div class="c" style="left:677px;top:628px;width:68px;height:25px;">1.36</div><div class="c" style="left:746px;top:628px;width:68px;height:25px;">4.76</div><div class="c" style="left:815px;top:628px;width:70px;height:25px;">8.78</div><div class="c" style="left:886px;top:628px;width:39px;height:25px;color:#1a1aa8"><span class="k">负</span></div><div class="c" style="left:926px;top:628px;width:39px;height:25px;color:#dd1c1c"><span class="k">赢</span></div><div class="c" style="left:966px;top:628px;width:60px;height:25px;color:#dd1c1c"><span class="k">大</span></div><div class="c" style="left:0px;top:654px;width:79px;height:25px;color:#fff">欧国联</div><div class="c" style="left:81px;top:654px;width:79px;height:25px;">24-11-20</div><div class="c" style="left:161px;top:654px;width:94px;height:25px;"><span class="k">斯洛伐克</span></div><div class="c" style="left:256px;top:654px;width:94px;height:25px;"><span style="color:#cc1a1a">1-0</span>(0-0)</div><div class="c" style="left:351px;top:654px;width:40px;height:25px;">9-4</div><div class="c" style="left:392px;top:654px;width:90px;height:25px;"><span style="color:#137013"><span class="k">爱沙尼亚</span></span></div><div class="c" style="left:483px;top:654px;width:40px;height:25px;">1.05</div><div class="c" style="left:524px;top:654px;width:109px;height:25px;"><span class="k">球半</span>/<span class="k">两</span></div><div class="c" style="left:634px;top:654px;width:42px;height:25px;">0.84</div><div class="c" style="left:677px;top:654px;width:68px;height:25px;">1.24</div><div class="c" style="left:746px;top:654px;width:68px;height:25px;">5.84</div><div class="c" style="left:815px;top:654px;width:70px;height:25px;">12.08</div><div class="c" style="left:886px;top:654px;width:39px;height:25px;color:#1a1aa8"><span class="k">负</span></div><div class="c" style="left:926px;top:654px;width:39px;height:25px;color:#dd1c1c"><span class="k">赢</span></div><div class="c" style="left:966px;top:654px;width:60px;height:25px;color:#1a1aa8"><span class="k">小</span></div><div class="c" style="left:0px;top:680px;width:79px;height:25px;color:#fff">欧国联</div><div class="c" style="left:81px;top:680px;width:79px;height:25px;">24-11-16</div><div class="c" style="left:161px;top:680px;width:94px;height:25px;"><span class="k">阿塞拜疆</span></div><div class="c" style="left:256px;top:680px;width:94px;height:25px;"><span style="color:#cc1a1a">0-0</span>(0-0)</div><div class="c" style="left:351px;top:680px;width:40px;height:25px;">8-3</div><div class="c" style="left:392px;top:680px;width:90px;height:25px;"><span style="color:#137013"><span class="k">爱沙尼亚</span></span></div><div class="c" style="left:483px;top:680px;width:40px;height:25px;">0.99</div><div class="c" style="left:524px;top:680px;width:109px;height:25px;"><span class="k">半</span>/<span class="k">一</span></div><div class="c" style="left:634px;top:680px;width:42px;height:25px;">0.90</div><div class="c" style="left:677px;top:680px;width:68px;height:25px;">1.68</div><div class="c" style="left:746px;top:680px;width:68px;height:25px;">3.52</div><div class="c" style="left:815px;top:680px;width:70px;height:25px;">5.38</div><div class="c" style="left:886px;top:680px;width:39px;height:25px;color:#137013"><span class="k">平</span></div><div class="c" style="left:926px;top:680px;width:39px;height:25px;color:#dd1c1c"><span class="k">赢</span></div><div class="c" style="left:966px;top:680px;width:60px;height:25px;color:#1a1aa8"><span class="k">小</span></div><div class="r" style="left:0px;top:706px;width:1026px;height:25px;background:#fff;"></div><div class="c" style="left:0px;top:706px;width:1026px;height:25px;"><span style="letter-spacing:0.2px"><span class="k">近</span><span style="color:#cc1a1a">10</span><span class="k">场</span>,<span class="k">胜</span>1<span class="k">平</span>3<span class="k">负</span>6, <span class="k">胜率</span>:<span style="color:#cc1a1a">10%</span> <span class="k">让胜率</span>:<span style="color:#cc1a1a">60%</span> <span class="k">大率</span>:<span style="color:#cc1a1a">50%</span> <span class="k">单率</span>:<span style="color:#cc1a1a">50%</span></span></div><div class="r" style="left:0px;top:731px;width:1026px;height:1px;background:#c2c2c2;"></div>
</body></html>
